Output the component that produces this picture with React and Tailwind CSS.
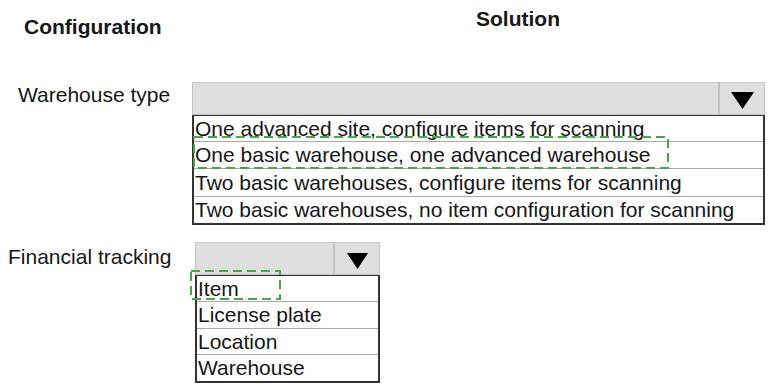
import React from "react";

const Arrow = ({ w, h }) => (
  <svg width={w} height={h} viewBox={`0 0 ${w} ${h}`}>
    <polygon points={`0,0 ${w},0 ${w / 2},${h}`} fill="#000" />
  </svg>
);

const Dash = ({ w, h }) => (
  <svg width={w} height={h} className="absolute pointer-events-none" style={{ overflow: "visible" }}>
    <rect x="1" y="1" width={w - 2} height={h - 2} fill="none" stroke="#45a845" strokeWidth="2" strokeDasharray="9 5" />
  </svg>
);

function Dropdown({ width, headH, divLeft, arrowW, arrowH, rows, rowH, highlight }) {
  return (
    <div className="flex flex-col" style={{ width }}>
      <div className="flex bg-[#dfdfdf] border border-[#c6c6c6]" style={{ height: headH }}>
        <div className="border-r-2 border-[#c2c2c2]" style={{ width: divLeft }} />
        <div className="flex-1 flex items-center justify-center pt-[4px]">
          <Arrow w={arrowW} h={arrowH} />
        </div>
      </div>
      <div className="relative border-2 border-t-[1.5px] border-[#333333] bg-white">
        {rows.map((r, i) => (
          <div
            key={r}
            className={`flex items-center pl-[1px] text-[21px] leading-[24px] text-[#161616] ${i < rows.length - 1 ? "border-b border-[#a9a9a9]" : ""}`}
            style={{ height: rowH[i] }}
          >
            {r}
          </div>
        ))}
        {highlight}
      </div>
    </div>
  );
}

export default function App() {
  return (
    <div className="w-[772px] h-[384px] bg-white overflow-hidden text-[#161616]" style={{ fontFamily: '"Liberation Sans", Arial, sans-serif' }}>
      <div className="flex items-start h-[82px]">
        <div className="w-[476px] pl-[24px] pt-[15px] text-[21px] leading-[24px] font-bold">Configuration</div>
        <div className="pt-[7px] text-[21px] leading-[24px] font-bold">Solution</div>
      </div>

      <div className="flex items-start">
        <div className="w-[192px] pl-[18px] pt-[1px] text-[21px] leading-[23px]">Warehouse type</div>
        <Dropdown
          width={573}
          headH={33}
          divLeft={527}
          arrowW={23}
          arrowH={17}
          rowH={[26, 27, 28, 26]}
          rows={[
            "One advanced site, configure items for scanning",
            "One basic warehouse, one advanced warehouse",
            "Two basic warehouses, configure items for scanning",
            "Two basic warehouses, no item configuration for scanning",
          ]}
          highlight={
            <div className="absolute left-[-1px] top-[20px]">
              <Dash w={476} h={33} />
            </div>
          }
        />
      </div>

      <div className="flex items-start mt-[17px]">
        <div className="w-[195px] pl-[8px] pt-[3px] text-[21px] leading-[23px]">Financial tracking</div>
        <Dropdown
          width={185}
          headH={33}
          divLeft={139}
          arrowW={21}
          arrowH={16}
          rowH={[26, 27, 26, 26]}
          rows={["Item", "License plate", "Location", "Warehouse"]}
          highlight={
            <div className="absolute left-[-7px] top-[-6px]">
              <Dash w={91} h={30} />
            </div>
          }
        />
      </div>
    </div>
  );
}
